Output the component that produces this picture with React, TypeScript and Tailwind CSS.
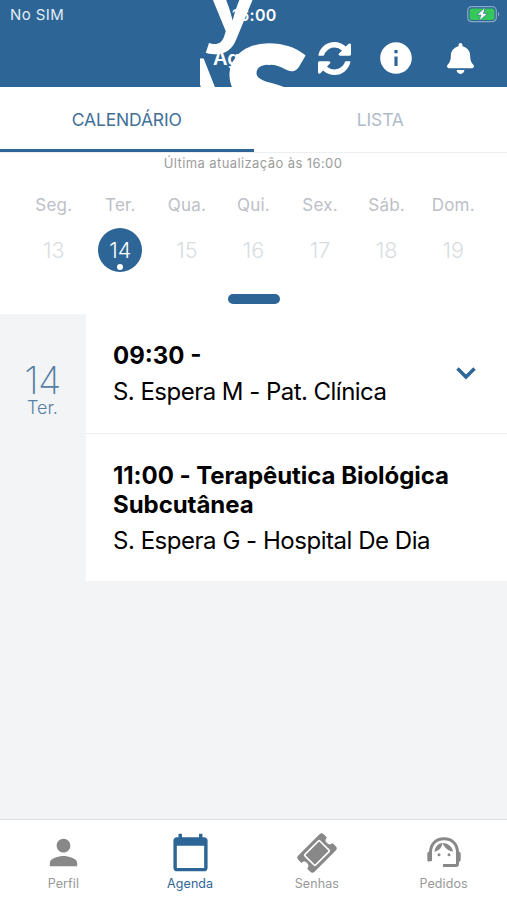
import { useState } from 'react';
import { FaBell } from 'react-icons/fa';
import { MdCalendarToday, MdInfo, MdPerson } from 'react-icons/md';
import clsx from 'clsx';

const WEEK = [
  { label: 'Seg.', day: 13 },
  { label: 'Ter.', day: 14 },
  { label: 'Qua.', day: 15 },
  { label: 'Qui.', day: 16 },
  { label: 'Sex.', day: 17 },
  { label: 'Sáb.', day: 18 },
  { label: 'Dom.', day: 19 },
];

function RefreshIcon() {
  return (
    <svg viewBox="0 0 1536 1536" className="h-[33px] w-[33px]" fill="currentColor">
      <path d="M1511 928q0 5-1 7-64 268-268 434.500t-478 166.500q-146 0-282.500-55t-243.500-157l-129 129q-19 19-45 19t-45-19-19-45v-448q0-26 19-45t45-19h448q26 0 45 19t19 45-19 45l-137 137q71 66 161 102t187 36q134 0 250-65t186-179q11-17 53-117 8-23 30-23h192q13 0 22.500 9.500t9.500 22.500zm25-800v448q0 26-19 45t-45 19h-448q-26 0-45-19t-19-45 19-45l138-138q-148-137-349-137-134 0-250 65t-186 179q-11 17-53 117-8 23-30 23h-199q-13 0-22.500-9.500t-9.500-22.500v-7q65-268 270-434.500t480-166.500q146 0 284 55.500t245 156.500l130-129q19-19 45-19t45 19 19 45z" />
    </svg>
  );
}

function TicketIcon() {
  return (
    <svg viewBox="0 0 40 40" className="h-10 w-10">
      <g transform="rotate(-45 20 20)">
        <path
          d="M5 8.500h30a3 3 0 0 1 3 3v4.500a4 4 0 0 0 0 8v4.500a3 3 0 0 1-3 3h-30a3 3 0 0 1-3-3v-4.500a4 4 0 0 0 0-8v-4.500a3 3 0 0 1 3-3z"
          fill="currentColor"
        />
        <rect x="9.500" y="12.500" width="21" height="15" rx="1" fill="none" stroke="white" strokeWidth="1.700" />
      </g>
    </svg>
  );
}

function AgentIcon() {
  return (
    <svg viewBox="0 0 36 36" className="h-9 w-9" fill="none" stroke="currentColor">
      <path d="M4.500 26V17.500C4.500 9 10 3.800 18 3.800S31.500 9 31.500 17.500V29a1.500 1.500 0 0 1-1.500 1.500H17" strokeWidth="3" />
      <path d="M3 18.500v6.500M33 18.500v6.500" strokeWidth="3.400" strokeLinecap="round" />
      <path d="M8.500 17C9 11.500 12.500 8 16.500 8c-.5 4.500-3.500 7.500-8 9zM16.500 8c5 0 9.500 3 10.500 8.500-4.500-.5-8.500-3.500-10.500-8.500z" fill="currentColor" stroke="none" />
      <circle cx="13" cy="19.700" r="1.500" fill="currentColor" stroke="none" />
      <circle cx="23" cy="19.700" r="1.500" fill="currentColor" stroke="none" />
    </svg>
  );
}

function Header() {
  return (
    <header className="relative h-[87px] overflow-hidden bg-[#2e6597] text-white">
      <div className="flex h-[29px] items-center justify-between pr-[7px] pl-[10px]">
        <span className="pt-px text-[15px] tracking-[0.4px] text-[#e2edf5]">No SIM</span>
        <svg viewBox="0 0 33 17" className="h-[17px] w-[33px]">
          <rect x="0.700" y="0.700" width="28.600" height="15" rx="4" fill="none" stroke="#89a9c4" strokeWidth="1.200" />
          <rect x="2.500" y="2.500" width="25" height="11.400" rx="2.500" fill="#35c759" />
          <path d="M31 6v4.500c1.800-.7 1.800-3.800 0-4.500z" fill="#89a9c4" />
          <path d="M18 1.500 10 9h4l-2 6 8.500-7.500h-4z" fill="white" stroke="#2e6597" strokeWidth="0.600" />
        </svg>
      </div>
      <div className="flex h-[58px] items-center justify-end pr-[33px]">
        <RefreshIcon />
        <MdInfo className="ml-[26px] h-[38px] w-[38px]" />
        <FaBell className="ml-[32px] h-[31px] w-[27px]" />
      </div>
      <span className="absolute top-[5px] left-[232px] text-[16px] leading-5 font-semibold tracking-[0.3px]">16:00</span>
      <span className="absolute top-[46px] left-[213px] text-[20px] leading-6 font-semibold">Agenda</span>
      {/* Oversized label spilling over the title */}
      <div className="pointer-events-none absolute inset-y-0 left-[200px] w-[108px] overflow-hidden">
        <span className="absolute -top-[70px] -left-[2px] origin-left scale-x-[1.080] text-[112px] leading-[120px] font-medium">y</span>
        <span className="absolute top-[36px] -left-[43px] font-['Lato'] text-[112px] leading-[120px] font-bold">A</span>
        <span className="absolute top-[33px] left-[25px] origin-left scale-x-[1.120] font-['Lato'] text-[136px] leading-[120px] font-black [-webkit-text-stroke:5px_white]">
          S
        </span>
      </div>
    </header>
  );
}

export default function App() {
  const [tab, setTab] = useState('calendar');

  return (
    <div className="flex h-[900px] w-[507px] flex-col overflow-hidden bg-white font-['Inter',sans-serif]">
      <Header />

      <nav className="grid h-[66px] shrink-0 grid-cols-2 border-b border-[#edf0f1]">
        {[
          { id: 'calendar', label: 'CALENDÁRIO' },
          { id: 'list', label: 'LISTA' },
        ].map(({ id, label }) => (
          <button
            key={id}
            type="button"
            onClick={() => setTab(id)}
            className={clsx(
              'border-b-[3px] pt-[4px] text-[17.500px] tracking-[-0.15px]',
              tab === id ? 'border-[#2e6597] text-[#426f97]' : 'border-transparent text-[#afbbc9]',
            )}
          >
            {label}
          </button>
        ))}
      </nav>

      <section className="flex h-[161px] shrink-0 flex-col items-center">
        <p className="pr-px text-[13px] leading-5 tracking-[0.4px] text-[#9c9c9c]">Última atualização às 16:00</p>
        <div className="mt-[22px] grid w-[466px] grid-cols-7">
          {WEEK.map(({ label, day }) => (
            <div key={day} className="flex flex-col items-center">
              <span className="text-[17px] leading-5 tracking-[0.200px] text-[#bdc0c7]">{label}</span>
              <span
                className={clsx(
                  'relative mt-[13px] flex h-11 w-11 items-center justify-center rounded-full text-[21.500px] font-light',
                  day === 14 ? 'bg-[#2e6597] text-white' : 'text-[#d8dde2]',
                )}
              >
                {day}
                {day === 14 && <i className="absolute bottom-[2px] h-[6px] w-[6px] rounded-full bg-white" />}
              </span>
            </div>
          ))}
        </div>
        <div className="mt-[22px] h-[10px] w-[52px] rounded-full bg-[#2e6597]" />
      </section>

      <main className="flex min-h-0 flex-1 items-start bg-[#f2f4f6]">
        <div className="flex w-[85px] shrink-0 flex-col items-center pt-[48px] text-[#557fa5]">
          <span className="text-[38px] leading-[36px] font-extralight tracking-[-0.5px]">14</span>
          <span className="text-[18px] leading-[20px] font-light">Ter.</span>
        </div>
        <div className="ml-px flex-1 bg-white text-[24px] text-black">
          <article className="flex h-[120px] items-center justify-between border-b border-[#ebedef] pr-[31px] pl-[27px]">
            <div>
              <h2 className="leading-[29px] font-bold">09:30 -</h2>
              <p className="mt-[7px] leading-[29px] tracking-[-0.53px]">S. Espera M - Pat. Clínica</p>
            </div>
            <svg viewBox="0 0 20 13" className="h-[13px] w-5">
              <path d="m1.500 1.500 8.500 8.500 8.500-8.500" fill="none" stroke="#2e6597" strokeWidth="3.500" />
            </svg>
          </article>
          <article className="h-[147px] pt-[27px] pl-[27px]">
            <h2 className="leading-[29px] font-bold tracking-[-0.05px]">
              11:00 - Terapêutica Biológica
              <br />
              Subcutânea
            </h2>
            <p className="mt-[7px] leading-[29px] tracking-[-0.47px]">S. Espera G - Hospital De Dia</p>
          </article>
        </div>
      </main>

      <footer className="grid h-[81px] shrink-0 grid-cols-4 border-t border-[#dfe2e4] bg-white text-[12.500px] tracking-[0.1px] text-[#999999]">
        <button type="button" className="flex flex-col items-center">
          <span className="flex h-[55px] items-center pt-[10px] text-[#888888]">
            <MdPerson className="h-[41px] w-[41px]" />
          </span>
          Perfil
        </button>
        <button type="button" className="flex flex-col items-center text-[#2e6597]">
          <span className="flex h-[55px] items-center pt-[10px]">
            <MdCalendarToday className="h-[41px] w-[41px]" />
          </span>
          Agenda
        </button>
        <button type="button" className="flex flex-col items-center">
          <span className="flex h-[55px] items-center pt-[11px] text-[#888888]">
            <TicketIcon />
          </span>
          Senhas
        </button>
        <button type="button" className="flex flex-col items-center">
          <span className="flex h-[55px] items-center pt-[11px] text-[#888888]">
            <AgentIcon />
          </span>
          Pedidos
        </button>
      </footer>
    </div>
  );
}
